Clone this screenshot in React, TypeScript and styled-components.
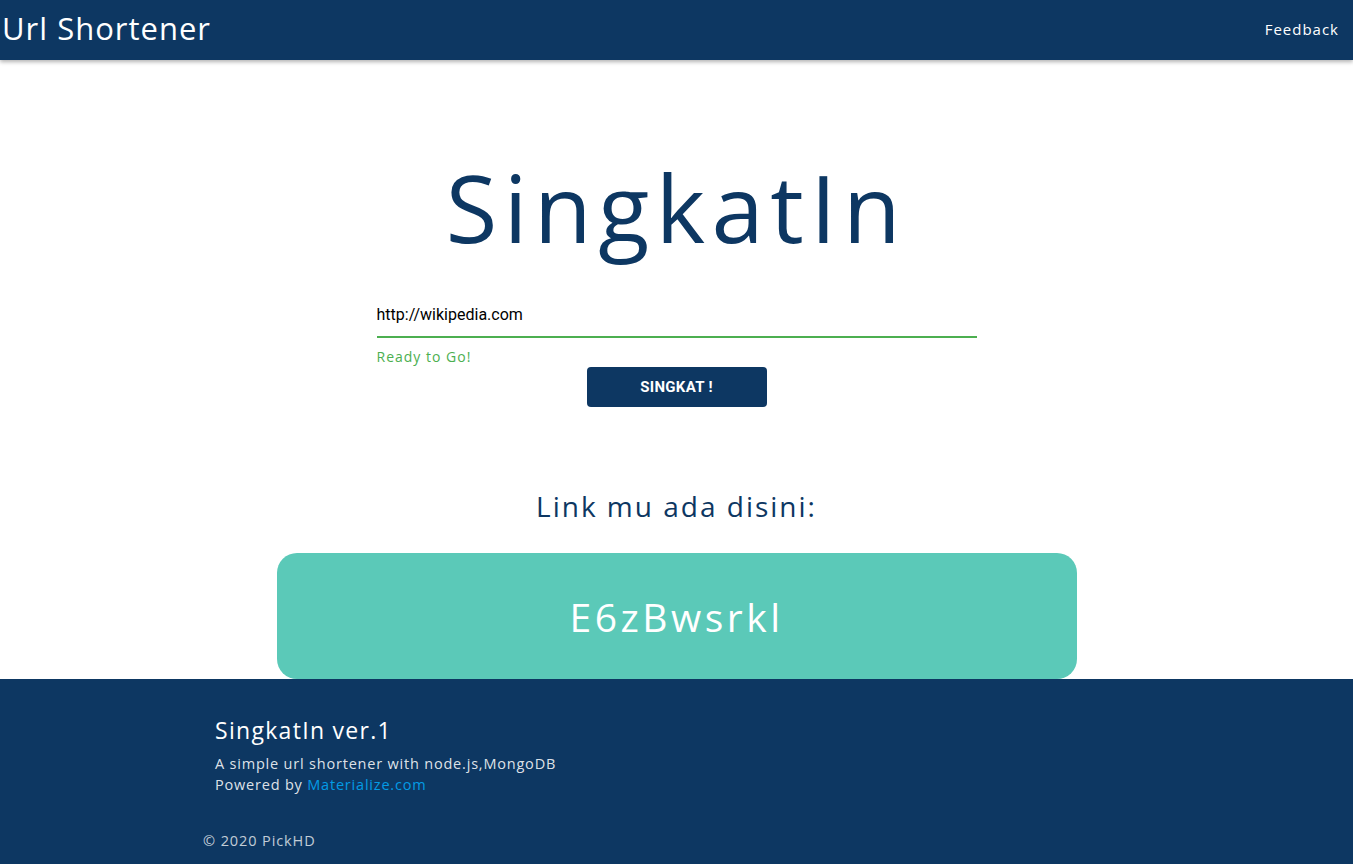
import React from "react";
import styled, { createGlobalStyle } from "styled-components";

const Global = createGlobalStyle`
  html, body { margin: 0; padding: 0; background: #fff; }
  body { font-family: "Open Sans", "DejaVu Sans", sans-serif; }
  * { box-sizing: border-box; }
`;

const NAVY = "#0d3762";

const Page = styled.div`
  width: 1353px;
  height: 864px;
  display: flex;
  flex-direction: column;
  overflow: hidden;
`;

const Nav = styled.nav`
  height: 60px;
  flex: none;
  background: ${NAVY};
  display: flex;
  align-items: center;
  justify-content: space-between;
  box-shadow: 0 2px 4px rgba(0, 0, 0, 0.3);
  position: relative;
  z-index: 2;
`;

const Brand = styled.a`
  color: #fff;
  font-size: 31px;
  letter-spacing: 1px;
  font-weight: 400;
  padding-left: 2px;
  margin-top: -4px;
  text-decoration: none;
`;

const NavLink = styled.a`
  color: #fff;
  font-size: 15px;
  letter-spacing: 1px;
  padding: 0 14px;
  margin-top: -2px;
  text-decoration: none;
`;

const Main = styled.main`
  flex: 1;
  display: flex;
  flex-direction: column;
  align-items: center;
  padding-top: 87px;
`;

const Title = styled.h1`
  margin: 0;
  color: ${NAVY};
  font-weight: 400;
  font-size: 94px;
  letter-spacing: 6.5px;
  line-height: 120px;
`;

const Form = styled.form`
  width: 600px;
  margin-top: 25px;
  display: flex;
  flex-direction: column;
`;

const Input = styled.input`
  font-family: Roboto, sans-serif;
  font-size: 16px;
  color: #000;
  border: none;
  border-bottom: 2px solid #4caf50;
  outline: none;
  height: 46px;
  padding: 0;
  background: transparent;
`;

const Helper = styled.span`
  color: #4caf50;
  font-size: 14px;
  letter-spacing: 1px;
  margin-top: 10px;
  line-height: 18px;
`;

const Button = styled.button`
  align-self: center;
  width: 180px;
  height: 40px;
  margin-top: 1px;
  border: none;
  border-radius: 4px;
  background: ${NAVY};
  color: #fff;
  font-family: Roboto, sans-serif;
  font-weight: 700;
  font-size: 15px;
  letter-spacing: 0.3px;
`;

const Subtitle = styled.h3`
  margin: 81px 0 0;
  color: ${NAVY};
  font-weight: 400;
  font-size: 28px;
  letter-spacing: 2px;
  line-height: 36px;
`;

const ResultBox = styled.div`
  width: 800px;
  height: 126px;
  flex: none;
  margin-top: 29px;
  background: #5bc9b8;
  border-radius: 20px;
  display: flex;
  align-items: center;
  justify-content: center;
  color: #fff;
  font-size: 39px;
  letter-spacing: 3.5px;
`;

const Footer = styled.footer`
  background: ${NAVY};
  height: 185px;
  flex: none;
  display: flex;
  flex-direction: column;
  padding: 35px 0 0 203px;
`;

const FooterBody = styled.div`
  padding-left: 12px;
  display: flex;
  flex-direction: column;
`;

const FooterTitle = styled.h5`
  margin: 0;
  color: #fff;
  font-weight: 400;
  font-size: 23px;
  letter-spacing: 1.3px;
  line-height: 32px;
`;

const FooterText = styled.p<{ $gap?: number }>`
  margin: ${(p) => p.$gap ?? 0}px 0 0;
  color: rgba(255, 255, 255, 0.87);
  font-size: 14.5px;
  letter-spacing: 0.8px;
  line-height: 21px;
`;

const FooterLink = styled.a`
  color: #039be5;
  text-decoration: none;
`;

const Copyright = styled.div`
  margin-top: 36px;
  color: rgba(255, 255, 255, 0.75);
  font-size: 14.5px;
  letter-spacing: 0.9px;
`;

export default function App() {
  return (
    <Page>
      <Global />
      <Nav>
        <Brand href="#">Url Shortener</Brand>
        <NavLink href="#">Feedback</NavLink>
      </Nav>
      <Main>
        <Title>SingkatIn</Title>
        <Form onSubmit={(e) => e.preventDefault()}>
          <Input defaultValue="http://wikipedia.com" />
          <Helper>Ready to Go!</Helper>
          <Button type="submit">SINGKAT !</Button>
        </Form>
        <Subtitle>Link mu ada disini:</Subtitle>
        <ResultBox>E6zBwsrkl</ResultBox>
      </Main>
      <Footer>
        <FooterBody>
          <FooterTitle>SingkatIn ver.1</FooterTitle>
          <FooterText $gap={7}>A simple url shortener with node.js,MongoDB</FooterText>
          <FooterText>
            Powered by <FooterLink href="#">Materialize.com</FooterLink>
          </FooterText>
        </FooterBody>
        <Copyright>© 2020 PickHD</Copyright>
      </Footer>
    </Page>
  );
}
